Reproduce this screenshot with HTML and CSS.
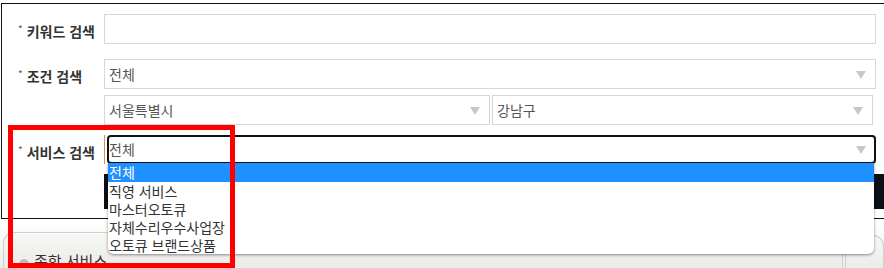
FILE: index.html
```
<!DOCTYPE html>
<html lang="ko">
<head>
    <meta charset="utf-8">
    <title>서비스 검색</title>
    <link rel="stylesheet" href="styles.css">
</head>
<body>
<div id="page">
    <div id="searchBox">
        <div class="row">
            <div class="label"><span class="star">*</span>키워드 검색</div>
            <div class="field"><div class="input"></div></div>
        </div>
        <div class="row first">
            <div class="label"><span class="star">*</span>조건 검색</div>
            <div class="field"><div class="select">전체<i class="arrow"></i></div></div>
        </div>
        <div class="row sub">
            <div class="label"></div>
            <div class="field split">
                <div class="select city">서울특별시<i class="arrow"></i></div>
                <div class="select gu">강남구<i class="arrow"></i></div>
            </div>
        </div>
        <div class="row service">
            <div class="label"><span class="star">*</span>서비스 검색</div>
            <div class="field">
                <div class="focusWrap"><div class="select open">전체<i class="arrow"></i></div></div>
            </div>
        </div>
        <div class="row btnRow">
            <div class="label"></div>
            <div class="field"><div class="searchBtn"></div></div>
        </div>
    </div>

    <div id="tabs">
        <div class="tab"><span class="dot"></span>종합 서비스</div>
        <div class="tab next"></div>
    </div>

    <ul id="options">
        <li class="on">전체</li>
        <li>직영 서비스</li>
        <li>마스터오토큐</li>
        <li>자체수리우수사업장</li>
        <li>오토큐 브랜드상품</li>
    </ul>

    <div id="mark"></div>
</div>
</body>
</html>
```

FILE: styles.css
```
html, body{
    margin:0;
    padding:0;
}
body{
    font-family:"Noto Sans CJK KR", "Noto Sans", sans-serif;
    color:#333;
    background:#fff;
}
#page{
    position:relative;
    width:884px;
    height:268px;
    overflow:hidden;
    background:linear-gradient(to bottom, #fff 0, #fff 222px, #ecece9 268px);
}
#searchBox{
    margin:3px 0 0 1px;
    width:900px;
    height:216px;
    box-sizing:border-box;
    border:1px solid #111;
    border-right:none;
    background:#fff;
    padding-top:10px;
}
.row{
    display:flex;
    align-items:center;
}
.row.first{ margin-top:15px; }
.row.sub{ margin-top:6px; }
.row.service{ margin-top:10px; }
.row.btnRow{ margin-top:10px; }
.label{
    width:102px;
    flex:none;
    box-sizing:border-box;
    padding:4px 0 0 16px;
    font-size:14px;
    font-weight:bold;
    color:#333;
    white-space:nowrap;
}
.star{
    font-size:10px;
    font-weight:normal;
    color:#555;
    margin-right:4px;
    vertical-align:4px;
}
.field{
    width:772px;
    flex:none;
}
.input{
    height:30px;
    box-sizing:border-box;
    border:1px solid #d6d6d6;
}
.select{
    position:relative;
    height:30px;
    line-height:28px;
    box-sizing:border-box;
    border:1px solid #d6d6d6;
    padding-left:4px;
    font-size:14px;
    color:#555;
}
.arrow{
    position:absolute;
    right:9px;
    top:11px;
    width:0;
    height:0;
    border-left:5px solid transparent;
    border-right:5px solid transparent;
    border-top:8px solid #c9c9c2;
}
.split{
    display:flex;
    gap:2px;
}
.select.city{ width:386px; }
.select.gu{ width:381px; }
.focusWrap{
    border-left:1px solid #e38a5c;
    padding-left:2px;
    height:29px;
}
.select.open{
    height:29px;
    line-height:25px;
    border:2px solid #111;
    border-radius:4px;
    padding-left:0;
}
.select.open .arrow{ right:8px; top:9px; }
.searchBtn{
    width:800px;
    height:35px;
    background:#0b1016;
}
#tabs{
    display:flex;
    margin-top:13px;
    margin-left:3px;
}
.tab{
    width:871px;
    height:40px;
    box-sizing:border-box;
    border:1px solid #cfcfcb;
    border-bottom:none;
    border-radius:11px 11px 0 0;
    background:linear-gradient(to bottom, #f7f7f6, #e9e9e5);
    padding:17px 0 0 15px;
    font-size:15px;
    color:#333;
    display:flex;
    align-items:flex-start;
}
.tab.next{
    width:40px;
    margin-left:2px;
    margin-top:3px;
}
.dot{
    width:10px;
    height:10px;
    border-radius:50%;
    background:#bdbdb8;
    margin:9px 5px 0 0;
}
#options{
    position:absolute;
    left:108px;
    top:163px;
    width:766px;
    margin:0;
    padding:0;
    list-style:none;
    background:#fff;
    border-radius:0 0 6px 6px;
    box-shadow:0 1px 3px rgba(0,0,0,0.45);
    font-size:14px;
    color:#333;
}
#options li{
    height:18px;
    line-height:18px;
    padding-left:1px;
}
#options li.on{
    background:#1e90ff;
    color:#fff;
    height:19px;
}
#mark{
    position:absolute;
    left:8px;
    top:125px;
    width:227px;
    height:143px;
    box-sizing:border-box;
    border:5px solid #f00;
}
```
